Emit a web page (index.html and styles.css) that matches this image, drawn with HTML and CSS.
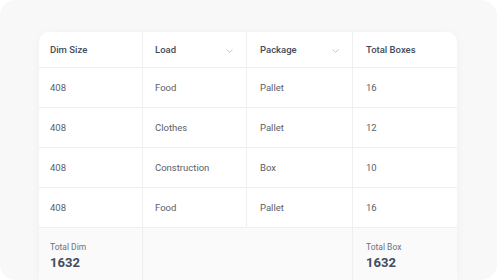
FILE: index.html
```html
<!DOCTYPE html>
<html>
<head>
<meta charset="utf-8">
<link rel="stylesheet" href="styles.css">
</head>
<body>
<div class="panel">
  <div class="card">
    <div class="row head">
      <div class="cell">Dim Size</div>
      <div class="cell drop">Load<svg class="chev" width="7" height="4" viewBox="0 0 7 4"><path d="M0.5 0.5 L3.5 3.3 L6.5 0.5" fill="none" stroke="#b3b8bf" stroke-width="0.8"/></svg></div>
      <div class="cell drop">Package<svg class="chev" width="7" height="4" viewBox="0 0 7 4"><path d="M0.5 0.5 L3.5 3.3 L6.5 0.5" fill="none" stroke="#b3b8bf" stroke-width="0.8"/></svg></div>
      <div class="cell">Total Boxes</div>
    </div>
    <div class="row body">
      <div class="cell">408</div><div class="cell">Food</div><div class="cell">Pallet</div><div class="cell">16</div>
    </div>
    <div class="row body">
      <div class="cell">408</div><div class="cell">Clothes</div><div class="cell">Pallet</div><div class="cell">12</div>
    </div>
    <div class="row body">
      <div class="cell">408</div><div class="cell">Construction</div><div class="cell">Box</div><div class="cell">10</div>
    </div>
    <div class="row body">
      <div class="cell">408</div><div class="cell">Food</div><div class="cell">Pallet</div><div class="cell">16</div>
    </div>
    <div class="row foot">
      <div class="cell"><span class="label">Total Dim</span><span class="value">1632</span></div>
      <div class="cell span"></div>
      <div class="cell"><span class="label">Total Box</span><span class="value">1632</span></div>
    </div>
  </div>
</div>
</body>
</html>
```
FILE: styles.css
```css
html, body { margin: 0; padding: 0; background: #ffffff; overflow: hidden; }
body { font-family: Roboto, "Noto Sans", sans-serif; }
.panel {
  background: #f8f8f8;
  border-radius: 16px;
  height: 280px;
  padding: 32px 40px 0 39px;
  box-sizing: border-box;
  overflow: hidden;
}
.card {
  width: 418px;
  background: #ffffff;
  border-radius: 10px;
  box-shadow: 0 2px 10px rgba(0,0,0,0.04);
  overflow: hidden;
}
.row {
  display: grid;
  grid-template-columns: 104px 104px 106px 104px;
  border-bottom: 1px solid #efefef;
  box-sizing: border-box;
}
.cell {
  padding-left: 11px;
  display: flex;
  align-items: center;
  border-right: 1px solid #efefef;
  box-sizing: border-box;
}
.cell:last-child { border-right: none; padding-left: 13px; }
.head .cell:nth-child(2), .body .cell:nth-child(2) { padding-left: 12px; }
.head .cell:nth-child(3), .body .cell:nth-child(3) { padding-left: 13px; }
.head { height: 36px; }
.head .cell {
  font-size: 9.5px;
  font-weight: 500;
  color: #434b59;
}
.drop { justify-content: space-between; padding-right: 13px; }
.chev { margin-top: 2px; }
.body { height: 40px; }
.body .cell {
  font-size: 9.5px;
  color: #5a6068;
}
.foot {
  height: 60px;
  background: #fafafa;
  border-bottom: none;
}
.foot .span { grid-column: span 2; }
.foot .cell {
  flex-direction: column;
  align-items: flex-start;
  justify-content: flex-start;
  padding-top: 13px;
}
.label { font-size: 8.5px; color: #6b7280; line-height: 12px; }
.value { font-size: 13px; font-weight: 700; color: #434c5a; line-height: 17px; margin-top: 1px; }
```
